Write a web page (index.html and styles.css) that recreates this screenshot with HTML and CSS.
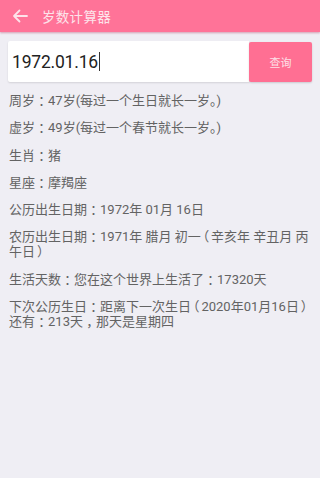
FILE: index.html
```html
<!DOCTYPE html>
<html lang="zh-CN">
<head>
<meta charset="utf-8">
<title>岁数计算器</title>
<link rel="stylesheet" href="styles.css">
</head>
<body>
<header class="topbar">
  <svg class="back" viewBox="0 0 16 14" width="16" height="14" aria-hidden="true">
    <path d="M15 7H2M7.5 1.5L2 7l5.5 5.5" fill="none" stroke="currentColor" stroke-width="1.8" stroke-linecap="round" stroke-linejoin="round"/>
  </svg>
  <h1 class="title">岁数计算器</h1>
</header>
<main class="content">
  <div class="search">
    <div class="field"><span class="value">1972.01.16</span><span class="caret"></span></div>
    <button class="btn" type="button">查询</button>
  </div>
  <div class="results">
    <p>周岁<span class="pu">：</span>47岁(每过一个生日就长一岁。)</p>
    <p>虚岁<span class="pu">：</span>49岁(每过一个春节就长一岁。)</p>
    <p>生肖<span class="pu">：</span>猪</p>
    <p>星座<span class="pu">：</span>摩羯座</p>
    <p>公历出生日期<span class="pu">：</span>1972年 01月 16日</p>
    <p>农历出生日期<span class="pu">：</span>1971年 腊月 初一<span class="pu pp">（</span>辛亥年 辛丑月 丙<span class="nb">午日<span class="pu pp">）</span></span></p>
    <p>生活天数<span class="pu">：</span>您在这个世界上生活了<span class="pu">：</span>17320天</p>
    <p>下次公历生日<span class="pu">：</span>距离下一次生日<span class="pu pp">（</span>2020年01月<span class="nb">16日<span class="pu pp">）</span></span>还有<span class="pu">：</span>213天<span class="pu">，</span>那天是星期四</p>
  </div>
</main>
</body>
</html>
```
FILE: styles.css
```css
html, body {
  margin: 0;
  padding: 0;
}
body {
  width: 320px;
  height: 478px;
  overflow: hidden;
  background: #efeef4;
  font-family: Roboto, "Noto Sans CJK SC", sans-serif;
}
.topbar {
  height: 32px;
  background: #ff7398;
  display: flex;
  align-items: center;
  padding-left: 12px;
  gap: 14px;
  color: #fde3ea;
  box-shadow: 0 1px 2px rgba(180, 60, 100, 0.45);
  position: relative;
}
.back {
  display: block;
}
.title {
  margin: 0;
  font-size: 13.5px;
  font-weight: 400;
  letter-spacing: 0.3px;
}
.content {
  padding: 9px 8px 0 8px;
}
.search {
  display: flex;
  height: 41px;
}
.field {
  flex: 0 0 241px;
  background: #fff;
  border-radius: 2px 0 0 2px;
  box-shadow: 0 1px 2px rgba(0, 0, 0, 0.12);
  display: flex;
  align-items: center;
  padding-left: 4px;
  box-sizing: border-box;
}
.value {
  font-size: 17.5px;
  color: #222;
  letter-spacing: -0.2px;
}
.caret {
  display: inline-block;
  width: 1px;
  height: 19px;
  background: #333;
  margin-left: 1px;
}
.btn {
  flex: 0 0 63px;
  border: none;
  margin: 1px 0 0 0;
  border-radius: 2px;
  background: #ff6f93;
  color: #fde0e8;
  font-family: "Noto Sans CJK SC", sans-serif;
  font-size: 11px;
  padding: 0;
  box-shadow: 0 1px 2px rgba(0, 0, 0, 0.15);
}
.results {
  padding: 11px 0 0 1px;
}
.results p {
  margin: 0 0 12.3px 0;
  font-size: 13px;
  line-height: 15px;
  color: #636363;
}
.pu {
  display: inline-block;
  width: 1em;
  text-align: center;
  font-feature-settings: "halt";
}
.pp {
  width: 0.8em;
}
.nb {
  white-space: nowrap;
}
```
